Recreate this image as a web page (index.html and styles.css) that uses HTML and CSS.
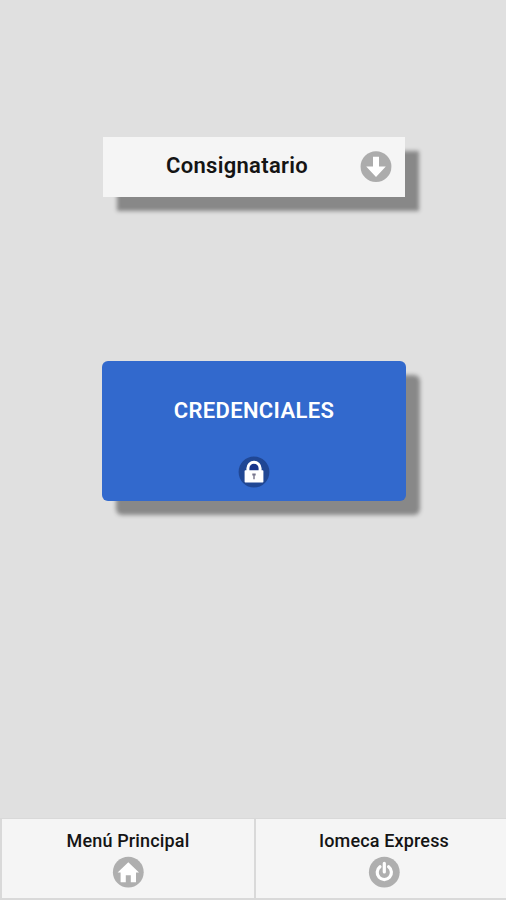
FILE: index.html
```html
<!DOCTYPE html>
<html lang="es">
<head>
<meta charset="utf-8">
<title>Iomeca Express</title>
<link rel="stylesheet" href="styles.css">
</head>
<body>
<main class="content">
  <button class="select">
    <span class="select-label">Consignatario</span>
    <svg class="icon" viewBox="0 0 32 32"><circle cx="16" cy="15.700" r="15.400" fill="#acacac"/><path d="M13 5.700h6v9.700h6.800L16 26l-9.800-10.600H13z" fill="#fff"/></svg>
  </button>
  <button class="credentials">
    <span class="credentials-label">CREDENCIALES</span>
    <svg class="icon" viewBox="0 0 32 32"><circle cx="16" cy="16" r="15.4" fill="#204794"/><path d="M9.900 15v-2.700a6.100 6.100 0 0 1 12.200 0V15" fill="#17358b" stroke="#fff" stroke-width="3"/><rect x="6.6" y="14.3" width="18.8" height="12.2" rx=".8" fill="#fff"/><path d="M14.3 17.6h3.4v2h-1v3.7h-1.4v-3.7h-1z" fill="#77758c"/></svg>
  </button>
</main>
<nav class="tabs">
  <a class="tab"><span class="tab-label">Menú Principal</span>
    <svg class="icon" viewBox="0 0 32 32"><circle cx="16.300" cy="16.200" r="15.400" fill="#afafaf"/><path d="M16.300 6.200 27 16.400h-3v9.800h-5.200v-7h-5v7H8.600v-9.800h-3z" fill="#fff"/></svg>
  </a>
  <a class="tab"><span class="tab-label">Iomeca Express</span>
    <svg class="icon" viewBox="0 0 32 32"><circle cx="16.300" cy="16.200" r="15.400" fill="#afafaf"/><path d="M12 10.800a7.100 7.100 0 1 0 8.600 0M16.300 7.300v8.700" fill="none" stroke="#fff" stroke-width="3.200" stroke-linecap="round"/></svg>
  </a>
</nav>
</body>
</html>
```
FILE: styles.css
```css
* { box-sizing: border-box; }
body {
  margin: 0;
  height: 900px;
  display: flex;
  flex-direction: column;
  background: #e0e0e0;
  color: #141414;
  font-family: Roboto, "Liberation Sans", sans-serif;
}
button { border: 0; padding: 0; font: inherit; color: inherit; }
.icon { display: block; width: 32px; height: 32px; flex: none; }
.content {
  flex: 1;
  display: flex;
  flex-direction: column;
  align-items: center;
  padding-top: 137px;
}
.select {
  width: 302px;
  height: 60px;
  margin-left: 2px;
  display: grid;
  grid-template-columns: 1fr 32px;
  align-items: center;
  padding: 0 13px 0 11px;
  background: #f5f5f5;
  box-shadow: 14px 14px 4px #888;
}
.select-label {
  font-size: 22px;
  font-weight: 600;
  line-height: 26px;
  letter-spacing: .3px;
  margin-top: -2px;
}
.credentials {
  width: 304px;
  height: 140px;
  margin: 164px 0 0 2px;
  display: flex;
  flex-direction: column;
  align-items: center;
  padding-top: 37px;
  gap: 32px;
  border-radius: 6px;
  background: #3269cd;
  color: #fff;
  box-shadow: 14px 14px 4px #888;
}
.credentials-label {
  font-size: 22px;
  font-weight: 600;
  line-height: 26px;
  letter-spacing: .35px;
}
.tabs {
  height: 82px;
  display: grid;
  grid-template-columns: 252px 1fr;
  gap: 2px;
  padding: 1px 0 2px 2px;
  background: #d9d9d9;
}
.tab {
  display: flex;
  flex-direction: column;
  align-items: center;
  padding-top: 11px;
  background: #f5f5f5;
}
.tab:last-child { padding-left: 6px; }
.tab-label {
  font-size: 18px;
  font-weight: 500;
  line-height: 22px;
  letter-spacing: .15px;
  margin-bottom: 4px;
}
```
